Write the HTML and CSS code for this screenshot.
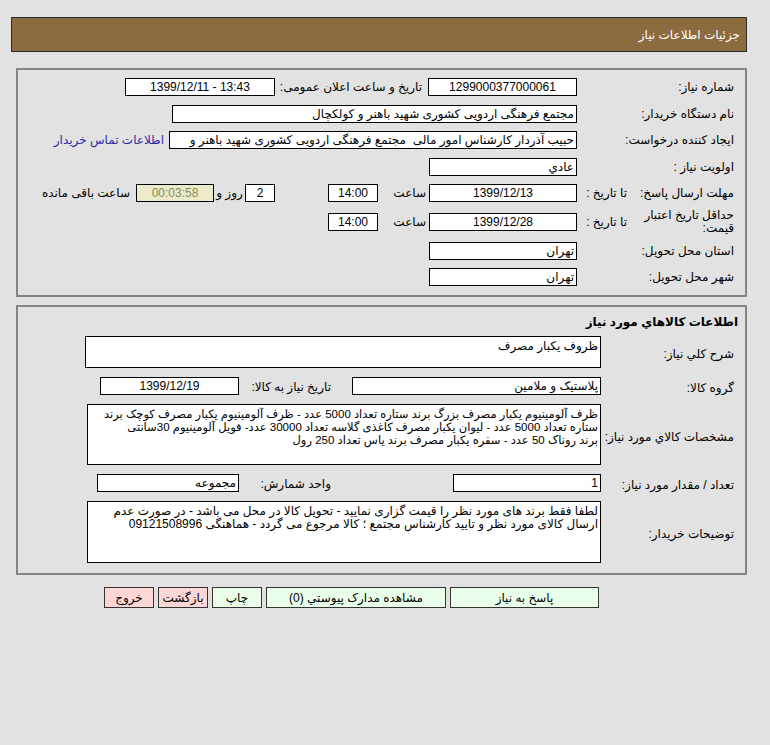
FILE: index.html
```html
<!DOCTYPE html>
<html lang="fa">
<head>
<meta charset="utf-8">
<title>جزئیات اطلاعات نیاز</title>
<link rel="stylesheet" href="styles.css">
</head>
<body>
<div class="page" dir="rtl">
  <div class="header">جزئیات اطلاعات نیاز</div>

  <div class="panel panel1">
    <div class="row">
      <div class="lbl">شماره نیاز:</div>
      <div class="box c w149" dir="ltr">1299000377000061</div>
      <div class="lbl2">تاریخ و ساعت اعلان عمومی:</div>
      <div class="box c w150" dir="ltr">1399/12/11 - 13:43</div>
    </div>
    <div class="row">
      <div class="lbl">نام دستگاه خریدار:</div>
      <div class="box w405">مجتمع فرهنگی اردویی کشوری شهید باهنر و کولکچال</div>
    </div>
    <div class="row">
      <div class="lbl">ایجاد کننده درخواست:</div>
      <div class="box w408">حبیب آذردار کارشناس امور مالی&nbsp; مجتمع فرهنگی اردویی کشوری شهید باهنر و</div>
      <a class="link" href="#">اطلاعات تماس خریدار</a>
    </div>
    <div class="row">
      <div class="lbl">اولویت نیاز :</div>
      <div class="box w148">عادي</div>
    </div>
    <div class="row">
      <div class="lbl-a">مهلت ارسال پاسخ:</div>
      <div class="lbl-b">تا تاریخ :</div>
      <div class="box c w148" dir="ltr">1399/12/13</div>
      <div class="hour">ساعت</div>
      <div class="box c w50" dir="ltr">14:00</div>
      <div class="box c w30 days" dir="ltr">2</div>
      <div class="daylbl">روز و</div>
      <div class="box c w78 timer" dir="ltr">00:03:58</div>
      <div class="remain">ساعت باقی مانده</div>
    </div>
    <div class="row row-tall">
      <div class="lbl-a two">حداقل تاریخ اعتبار<br>قیمت:</div>
      <div class="lbl-b">تا تاریخ :</div>
      <div class="box c w148" dir="ltr">1399/12/28</div>
      <div class="hour">ساعت</div>
      <div class="box c w50" dir="ltr">14:00</div>
    </div>
    <div class="row">
      <div class="lbl">استان محل تحویل:</div>
      <div class="box w148">تهران</div>
    </div>
    <div class="row">
      <div class="lbl">شهر محل تحویل:</div>
      <div class="box w148">تهران</div>
    </div>
  </div>

  <div class="panel panel2">
    <div class="title">اطلاعات کالاهاي مورد نیاز</div>
    <div class="rows">
      <div class="row2">
        <div class="lbl3">شرح کلي نیاز:</div>
        <div class="area w516 h32">ظروف یکبار مصرف</div>
      </div>
      <div class="row2">
        <div class="lbl3">گروه کالا:</div>
        <div class="box w249">پلاستیک و ملامین</div>
        <div class="mid w113">تاریخ نیاز به کالا:</div>
        <div class="box c w139" dir="ltr">1399/12/19</div>
      </div>
      <div class="row2">
        <div class="lbl3">مشخصات کالاي مورد نیاز:</div>
        <div class="area w514 h61 small"><span class="ln">ظرف آلومینیوم یکبار مصرف بزرگ برند ستاره تعداد 5000 عدد - ظرف آلومینیوم یکبار مصرف کوچک برند</span><span class="ln">ستاره تعداد 5000 عدد - لیوان یکبار مصرف کاغذی گلاسه تعداد 30000 عدد- فویل آلومینیوم 30سانتی</span><span class="ln">برند روناک 50 عدد - سفره یکبار مصرف برند یاس تعداد 250 رول</span></div>
      </div>
      <div class="row2">
        <div class="lbl3">تعداد / مقدار مورد نیاز:</div>
        <div class="box w148">1</div>
        <div class="mid w214">واحد شمارش:</div>
        <div class="box w142">مجموعه</div>
      </div>
      <div class="row2">
        <div class="lbl3">توضیحات خریدار:</div>
        <div class="area w514 h62"><span class="ln">لطفا فقط برند های مورد نظر را قیمت گزاری نمایید - تحویل کالا در محل می باشد - در صورت عدم</span><span class="ln">ارسال کالای مورد نظر و تایید کارشناس مجتمع ؛ کالا مرجوع می گردد - هماهنگی 09121508996</span></div>
      </div>
    </div>
  </div>

  <div class="actions">
    <button class="btn green b149" type="button">پاسخ به نیاز</button>
    <button class="btn green b180" type="button">مشاهده مدارک پیوستي (0)</button>
    <button class="btn green b50" type="button">چاپ</button>
    <button class="btn pink b50" type="button">بازگشت</button>
    <button class="btn pink b50" type="button">خروج</button>
  </div>
</div>
</body>
</html>
```

FILE: styles.css
```css
html, body {
  margin: 0;
  background: #e2e2e2;
}
body {
  font-family: "Liberation Sans", "DejaVu Sans", sans-serif;
  font-size: 12px;
  color: #000;
}
.page {
  width: 736px;
  margin-left: 11px;
  padding-top: 17px;
  direction: rtl;
}
.header {
  height: 35px;
  box-sizing: border-box;
  background: #8c6b3f;
  border: 1px solid #2c2c2c;
  color: #fff;
  font-size: 12px;
  display: flex;
  align-items: center;
  padding-right: 6px;
}
.panel {
  box-sizing: border-box;
  width: 731px;
  margin-left: 2px;
  border: 2px solid #858585;
}
.panel1 {
  margin-top: 16px;
  padding: 4px 11px 4.5px 0;
}
.row {
  display: flex;
  align-items: center;
  height: 26.5px;
  white-space: nowrap;
}
.row-tall {
  height: 31px;
}
.lbl {
  width: 157px;
  flex: none;
}
.lbl-a {
  width: 101px;
  flex: none;
}
.lbl-a.two {
  line-height: 13px;
}
.lbl-b {
  width: 56px;
  flex: none;
  box-sizing: border-box;
  padding-right: 6px;
}
.lbl2 {
  width: 153px;
  flex: none;
  box-sizing: border-box;
  padding-right: 6px;
}
.box {
  flex: none;
  box-sizing: border-box;
  height: 18px;
  line-height: 16px;
  border: 1px solid #000;
  background: #fff;
  padding: 0 2px;
  white-space: nowrap;
  overflow: hidden;
  text-align: right;
  direction: rtl;
}
.box.c {
  text-align: center;
}
.box[dir="ltr"] {
  direction: ltr;
}
.w30 { width: 30px; }
.w50 { width: 50px; }
.w78 { width: 78px; }
.w139 { width: 139px; }
.w142 { width: 142px; }
.w148 { width: 148px; }
.w149 { width: 149px; }
.w150 { width: 150px; }
.w249 { width: 249px; }
.w405 { width: 405px; }
.w408 { width: 408px; }
.w514 { width: 514px; }
.w516 { width: 516px; }
.link {
  margin-right: 5px;
  color: #2b2ba8;
  text-decoration: none;
  white-space: nowrap;
}
.hour {
  width: 51px;
  flex: none;
  box-sizing: border-box;
  padding-right: 3px;
}
.days {
  margin-right: 53px;
}
.daylbl {
  width: 31px;
  flex: none;
  text-align: center;
}
.timer {
  background: #ebebc8;
  color: #8a8a62;
}
.remain {
  margin-right: 6px;
  white-space: nowrap;
}
.panel2 {
  margin-top: 8px;
  padding: 5px 11px 10px 0;
}
.title {
  height: 20px;
  line-height: 20px;
  font-weight: bold;
  font-size: 12px;
  margin-right: -4px;
  margin-bottom: 4px;
}
.rows {
  display: flex;
  flex-direction: column;
  gap: 9px;
}
.row2 {
  display: flex;
  align-items: center;
  white-space: nowrap;
}
.lbl3 {
  width: 133px;
  flex: none;
  padding-top: 4px;
}
.mid {
  flex: none;
  box-sizing: border-box;
  padding-top: 2px;
}
.mid.w113 { width: 113px; padding-right: 21px; }
.mid.w214 { width: 214px; padding-right: 122px; }
.area {
  flex: none;
  box-sizing: border-box;
  border: 1px solid #000;
  background: #fff;
  padding: 3px 2px 0 2px;
  line-height: 13px;
  overflow: hidden;
}
.area.small {
  font-size: 11.5px;
}
.ln {
  display: block;
  white-space: nowrap;
}
.h32 { height: 32px; }
.h61 { height: 61px; }
.h62 { height: 62px; }
.actions {
  display: flex;
  gap: 4px;
  margin-top: 12px;
  margin-right: 148px;
}
.btn {
  box-sizing: border-box;
  height: 21px;
  margin: 0;
  padding: 0;
  border: 1px solid #333;
  font-family: inherit;
  font-size: 12px;
  color: #000;
  text-align: center;
  flex: none;
}
.green { background: #eaffea; }
.pink { background: #fdd6d6; }
.b149 { width: 149px; }
.b180 { width: 180px; }
.b50 { width: 50px; }
```
